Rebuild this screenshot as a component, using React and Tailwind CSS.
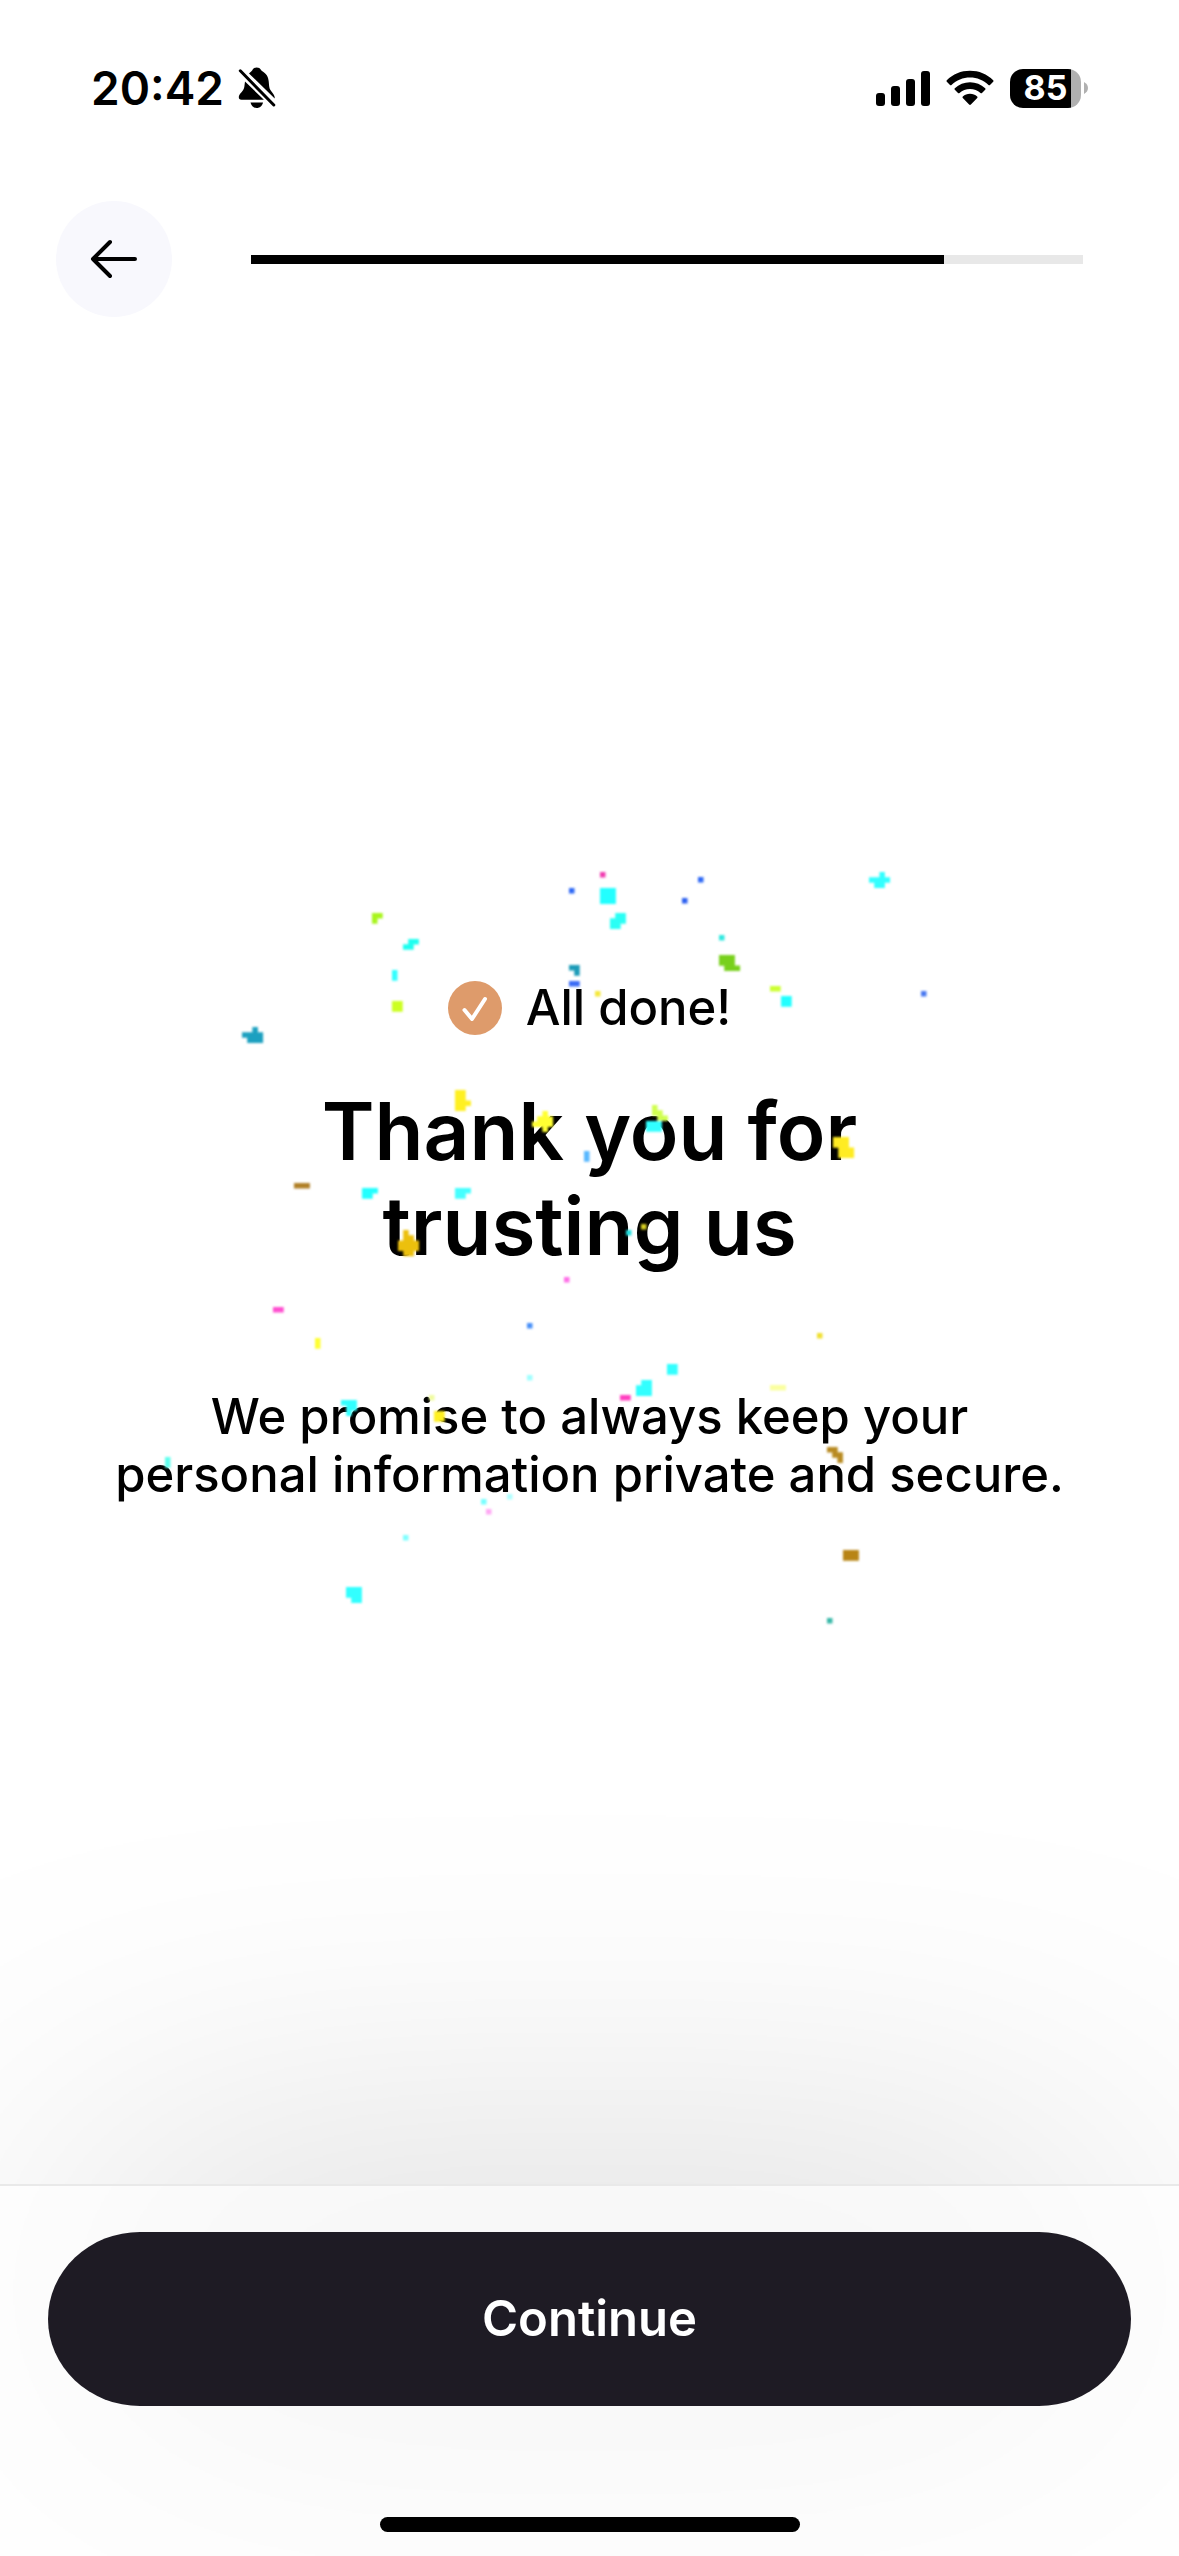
const CELL = 5.2;

// Each confetti piece: left, top, colour and its cells, row by row.
const CONFETTI = [
  [372, 913, "#a8f51f", "##", "#."],
  [403, 939, "#1ffff0", ".##", "##."],
  [392, 970, "#33ffff", "#", "#"],
  [392, 1001, "#ccff22", "##", "##"],
  [242, 1027, "#1aa0c0", "..#.", "####", ".###"],
  [569, 888, "#2f68f5", "#"],
  [569, 965, "#1c9bb8", "##", ".#"],
  [569, 981, "#3a6cf5", "##"],
  [600, 872, "#f03cb0", "#"],
  [698, 877, "#2f68f5", "#"],
  [682, 898, "#2b5ff0", "#"],
  [600, 888, "#22ffff", "###", "###", "###"],
  [610, 913, "#2afff5", ".##", "###", "##."],
  [869, 872, "#33ffff", "..#.", "####", ".##."],
  [719, 935, "#30e8e0", "#"],
  [719, 955, "#78d01a", "###.", "###.", ".###"],
  [595, 991, "#f5e83a", "#"],
  [770, 986, "#ccff33", "##"],
  [781, 996, "#22ffff", "##", "##"],
  [921, 991, "#4878f0", "#"],
  [455, 1090, "#fff020", "##.", "##.", "###", "##."],
  [532, 1111, "#ffff33", "..#.", ".###", "####", "..#."],
  [294, 1183, "#b08028", "###"],
  [362, 1188, "#22ffff", "###", "##."],
  [455, 1188, "#44ffff", "###", "##."],
  [398, 1230, "#ecc010", ".#..", ".##.", "####", "####", ".##."],
  [564, 1277, "#ff70e8", "#"],
  [273, 1307, "#ff50d0", "##"],
  [652, 1105, "#d0ff50", "#..", "##.", ".##"],
  [646, 1121, "#30ffff", "###", "###"],
  [584, 1151, "#58b8ff", "#", "#"],
  [833, 1137, "#ffec20", "###.", "###.", ".###", ".###"],
  [626, 1230, "#20e0e0", "#"],
  [641, 1224, "#d8d020", "#"],
  [315, 1338, "#ffff33", "#", "#"],
  [527, 1323, "#4890f8", "#"],
  [527, 1375, "#a0ffff", "#"],
  [429, 1395, "#f0fca0", "#"],
  [341, 1400, "#33ffff", "###", ".##", ".#."],
  [434, 1411, "#fff020", "##", "##"],
  [165, 1457, "#60ffee", "#", "#"],
  [481, 1499, "#78ffff", "#"],
  [507, 1494, "#b0ffff", "#"],
  [486, 1509, "#ffa8f4", "#"],
  [403, 1535, "#80ffff", "#"],
  [346, 1587, "#33ffff", "###", "###", ".##"],
  [817, 1333, "#f0e030", "#"],
  [667, 1364, "#33ffff", "##", "##"],
  [636, 1380, "#33ffff", ".##", "###", "###"],
  [620, 1395, "#ff40c0", "##"],
  [770, 1385, "#faffa0", "###"],
  [827, 1447, "#b88a20", "##.", ".##", "..#"],
  [843, 1550, "#b88414", "###", "###"],
  [827, 1618, "#38b8a8", "#"],
];

function Confetti() {
  return (
    <svg
      viewBox="0 851 1179 800"
      className="pointer-events-none absolute inset-x-0 top-1/2 w-full -translate-y-1/2"
      aria-hidden="true"
    >
      <defs>
        <filter id="soft" x="0" y="850" width="1179" height="800" filterUnits="userSpaceOnUse">
          <feGaussianBlur stdDeviation="1.3" />
        </filter>
      </defs>
      <g filter="url(#soft)">
        {CONFETTI.map(([x, y, color, ...rows], i) => (
          <path
            key={i}
            fill={color}
            d={rows
              .flatMap((row, r) =>
                [...row].map((cell, c) =>
                  cell === "#"
                    ? `M${x + c * CELL} ${y + r * CELL}h${CELL + 0.3}v${CELL + 0.3}h-${CELL + 0.3}z`
                    : ""
                )
              )
              .join("")}
          />
        ))}
      </g>
    </svg>
  );
}

function BellOff() {
  return (
    <svg viewBox="0 0 38 42" className="h-[42px] w-[38px]" role="img" aria-label="Silent mode">
      <path d="M11 6.500C12.500 5 13.500 4.300 14.300 3.200C15.300 1.200 17 .5 18.700 .5C20.500 .5 22.200 1.200 23.200 3.200C24 4.400 26 5 27.700 7C31 10.500 30.700 15 31.300 20C31.700 24 36.500 26.500 36.700 30.500V31.500Z" />
      <path d="M7 14.500L26 32.800H3.500C1.500 32.800 .8 31.800 .8 30.300C.8 26.500 5.700 24.500 6.300 20Z" />
      <path d="M12.500 35.500H25C24.300 38.800 21.800 41 18.700 41C15.600 41 13.200 38.800 12.500 35.500Z" />
      <path d="M2.300 3.800L35.800 38" fill="none" stroke="#fff" strokeWidth="6.500" />
      <path d="M2.300 3.800L35.800 38" fill="none" stroke="#000" strokeWidth="3" strokeLinecap="round" />
    </svg>
  );
}

function Wifi() {
  return (
    <svg viewBox="0 0 48 36" className="h-9 w-12" role="img" aria-label="Wi-Fi">
      <path d="M.8 10.200C7 4 15 .7 24 .7S41 4 47.200 10.200C47.700 10.700 47.700 11.200 47.200 11.700L44 14.900C43.500 15.400 43 15.400 42.500 14.900C37.500 10.200 31 7.600 24 7.600S10.500 10.200 5.500 14.900C5 15.400 4.500 15.400 4 14.900L.8 11.700C.3 11.200 .3 10.700 .8 10.200Z" />
      <path d="M8.800 18.200C13 14.400 18.200 12.300 24 12.300S35 14.400 39.200 18.200C39.700 18.700 39.700 19.200 39.200 19.700L36 22.900C35.500 23.400 35 23.400 34.500 22.900C31.600 20.300 28 18.900 24 18.900S16.400 20.300 13.500 22.900C13 23.400 12.500 23.400 12 22.900L8.800 19.700C8.300 19.200 8.300 18.700 8.800 18.200Z" />
      <path d="M16.800 26.400C18.800 24.500 21.200 23.700 24 23.700S29.200 24.500 31.200 26.400C31.700 26.900 31.700 27.400 31.200 27.900L24.900 34.600C24.300 35.200 23.700 35.200 23.100 34.600L16.800 27.900C16.300 27.400 16.300 26.900 16.800 26.400Z" />
    </svg>
  );
}

function StatusBar() {
  return (
    <div className="flex items-center justify-between pt-[60px] pr-[91px] pl-[91px]">
      <div className="flex items-center gap-[14px]">
        <span className="text-[46px] leading-[56px] font-semibold">20:42</span>
        <BellOff />
      </div>
      <div className="flex items-center">
        <div className="flex h-9 items-end gap-[6px]" role="img" aria-label="Signal strength">
          <span className="h-[13px] w-[9px] rounded-[3px] bg-black" />
          <span className="h-[20px] w-[9px] rounded-[3px] bg-black" />
          <span className="h-[27px] w-[9px] rounded-[3px] bg-black" />
          <span className="h-[35px] w-[9px] rounded-[3px] bg-black" />
        </div>
        <div className="ml-4">
          <Wifi />
        </div>
        <div className="ml-4 flex items-center gap-[3px]">
          <div className="flex h-[39px] w-[71px] items-center justify-center overflow-hidden rounded-[13px] bg-[linear-gradient(to_right,#000_86%,#b0b0b0_86%)]">
            <span className="text-[34px] leading-none font-bold text-white">85</span>
          </div>
          <svg viewBox="0 0 4 12" className="h-3 w-1" aria-hidden="true">
            <path d="M0 0C2.500 1.300 4 3.500 4 6S2.500 10.700 0 12Z" fill="#b0b0b0" />
          </svg>
        </div>
      </div>
    </div>
  );
}

function Header() {
  return (
    <header className="flex items-center pt-[85px] pr-24 pl-14">
      <button
        type="button"
        aria-label="Back"
        className="flex size-[116px] shrink-0 items-center justify-center rounded-full bg-[#f8f8fd]"
      >
        <svg viewBox="0 0 48 40" className="h-10 w-12" fill="none" stroke="#000" strokeWidth="4" strokeLinecap="round" strokeLinejoin="round">
          <path d="M45 20H3M20 3L3 20L20 37" />
        </svg>
      </button>
      <div
        role="progressbar"
        aria-label="Progress"
        aria-valuemin={0}
        aria-valuemax={6}
        aria-valuenow={5}
        className="ml-[79px] h-[9px] flex-1 bg-[#e8e8e8]"
      >
        <div className="h-full w-5/6 bg-black" />
      </div>
    </header>
  );
}

export default function App() {
  return (
    <div className="flex min-h-screen flex-col overflow-hidden bg-white font-['Inter',sans-serif] text-black">
      <StatusBar />
      <Header />
      <main className="relative z-10 flex flex-1 flex-col items-center justify-center px-6 pb-4 text-center">
        <div className="flex items-center gap-6">
          <svg viewBox="0 0 54 54" className="size-[54px]" aria-hidden="true">
            <circle cx="27" cy="27" r="27" fill="#de9b6b" />
            <path d="M16.500 29L24 38L37 18" fill="none" stroke="#fff" strokeWidth="4" strokeLinecap="round" strokeLinejoin="round" />
          </svg>
          <p className="text-[49px] leading-[54px] font-medium">All done!</p>
        </div>
        <h1 className="mt-12 max-w-[700px] text-[80px] leading-[95px] font-semibold">
          Thank you for trusting us
        </h1>
        <p className="mt-[115px] max-w-[960px] text-[49px] leading-[58px] font-medium">
          We promise to always keep your personal information private and secure.
        </p>
        <Confetti />
      </main>
      <footer className="relative isolate px-12 pb-6">
        <div className="absolute inset-x-16 top-2 -z-20 h-[200px] rounded-full bg-black/20 blur-[180px]" />
        <div className="absolute inset-0 -z-10 border-t-2 border-[#e9e9e9] bg-white/65" />
        <button
          type="button"
          className="mt-12 h-[174px] w-full rounded-[92px/87px] bg-[#1e1b24] text-[49px] font-semibold text-white"
        >
          Continue
        </button>
        <div className="mx-auto mt-[111px] h-[15px] w-[420px] rounded-full bg-black" />
      </footer>
    </div>
  );
}
